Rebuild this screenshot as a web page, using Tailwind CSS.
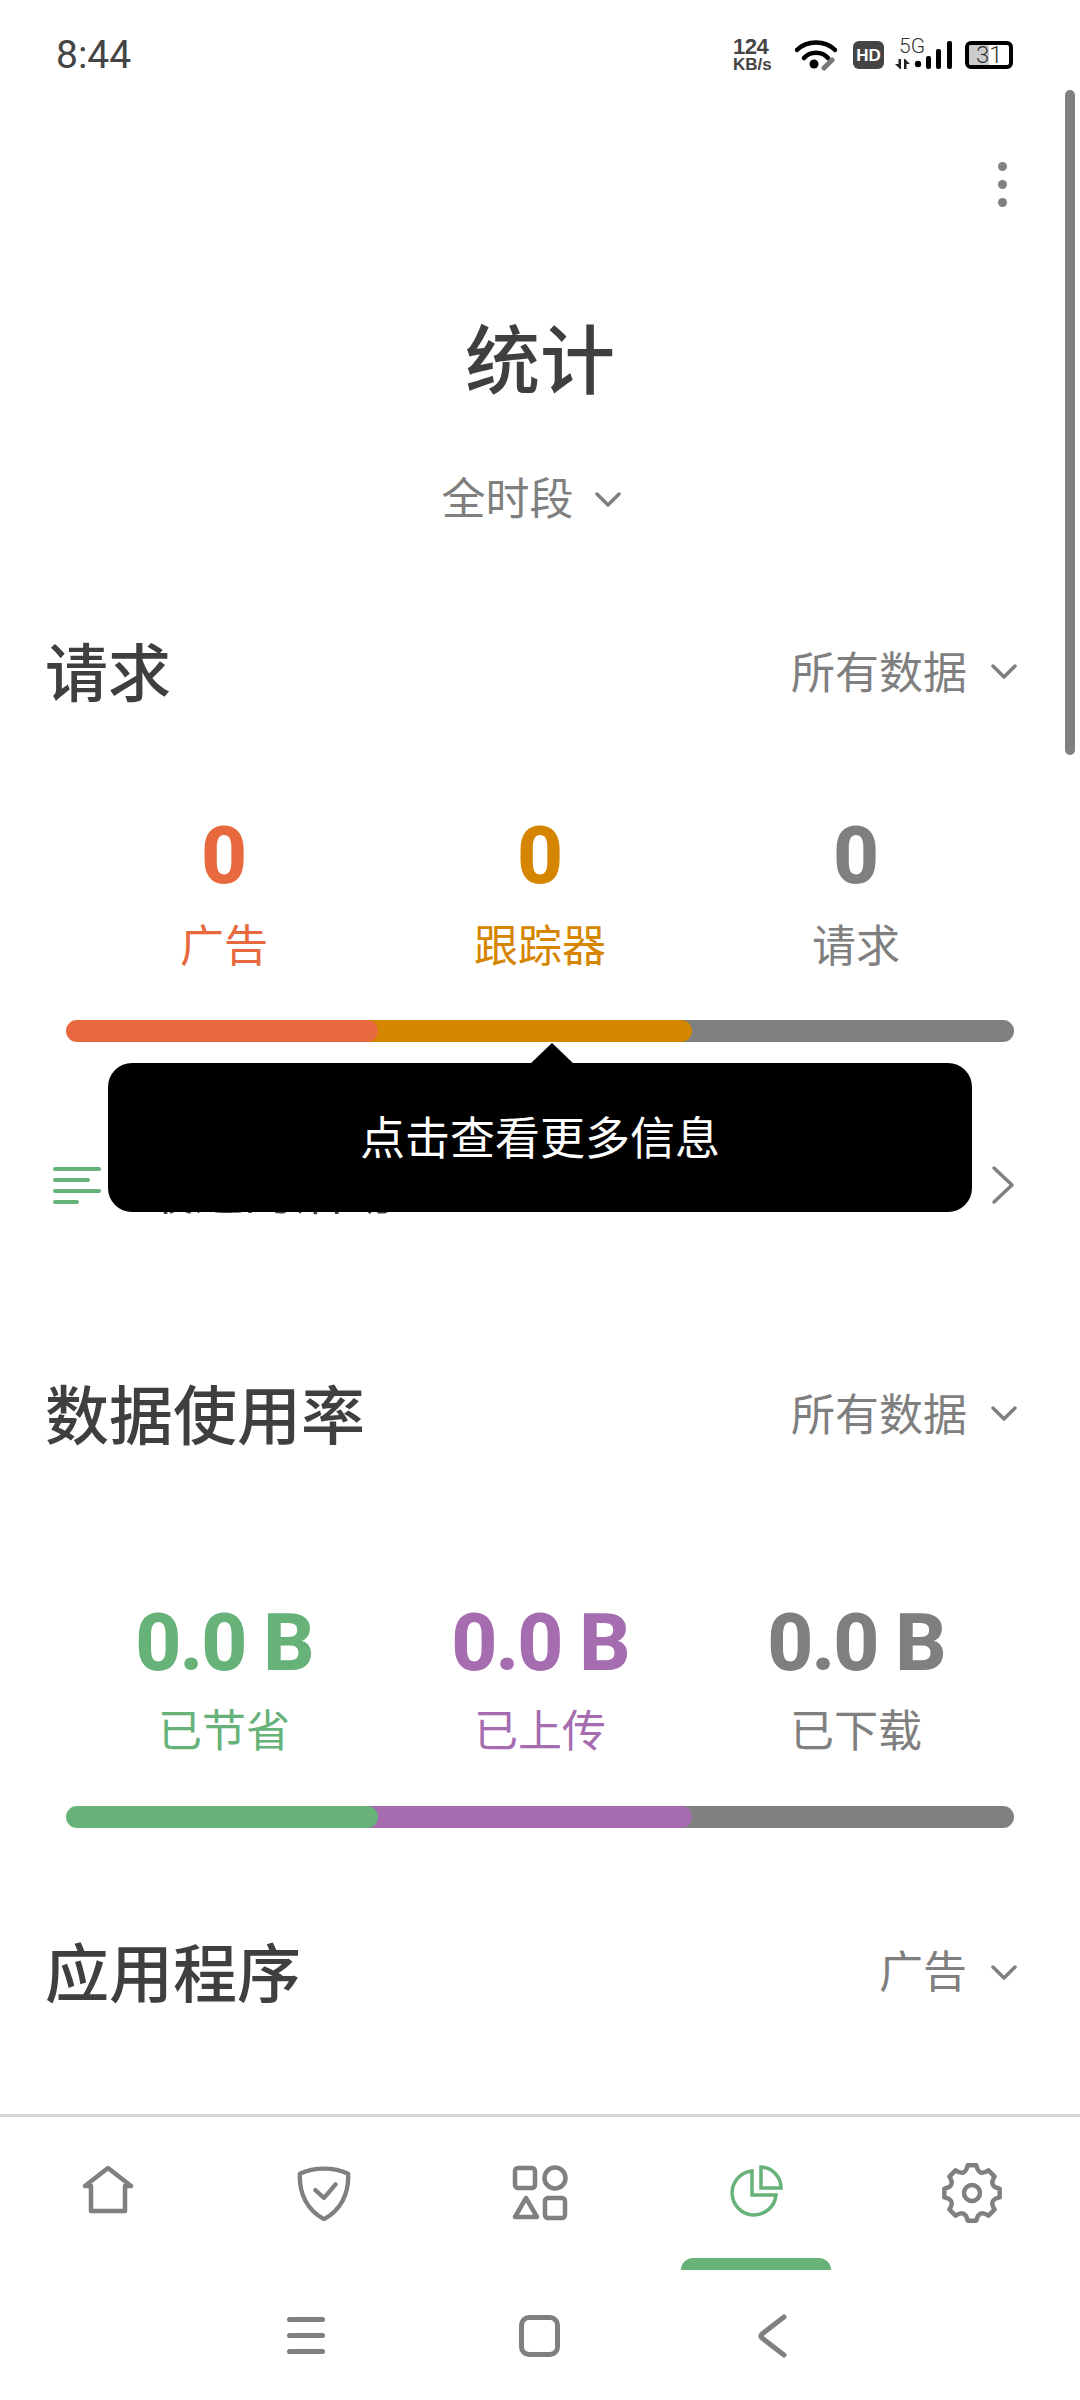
<!DOCTYPE html>
<html lang="zh-CN">
<head>
  <meta charset="UTF-8">
  <meta name="viewport" content="width=device-width, initial-scale=1.0">
  <title>统计</title>
  <script src="https://cdn.jsdelivr.net/npm/@tailwindcss/browser@4"></script>
</head>
<body class="bg-white">
  <div class="relative w-[1080px] h-[2400px] overflow-hidden bg-white text-[#3f3f3f] font-['Roboto','Noto_Sans_CJK_SC',sans-serif]">

    <!-- status bar -->
    <div class="h-[110px] flex items-center justify-between pl-[56px] pr-[67px]">
      <span class="text-[39px] leading-none text-[#444444]">8:44</span>
      <div class="flex items-center h-[50px]">
        <div class="w-[50px] flex flex-col font-['Liberation_Sans',sans-serif] font-bold text-[#444444]">
          <span class="text-[22px] leading-[20px] tracking-[-0.5px]">124</span>
          <span class="text-[17px] leading-[16px]">KB/s</span>
        </div>
        <svg class="ml-[12px]" width="42" height="32" viewBox="0 0 42 32" fill="none">
          <path d="M2 11C12 1 30 1 40 11" stroke="#000" stroke-width="4.5" stroke-linecap="round"/>
          <path d="M9 19C15 12 27 12 33 19" stroke="#000" stroke-width="4.5" stroke-linecap="round"/>
          <circle cx="19" cy="25" r="4.5" fill="#000"/>
          <path d="M29 29L37 21" stroke="#777" stroke-width="5" stroke-linecap="round"/>
        </svg>
        <div class="ml-[16px] w-[31px] h-[28px] rounded-[6px] bg-[#444444] text-white flex items-center justify-center font-['Liberation_Sans',sans-serif] font-bold text-[17px] leading-none">HD</div>
        <svg class="ml-[11px]" width="58" height="44" viewBox="0 0 58 44">
          <text x="4" y="20" font-family="Roboto" font-size="21" font-weight="300" fill="#333">5G</text>
          <path d="M3.5 26H6V36H5L0 31H3.5Z" fill="#222"/>
          <path d="M9 26H10L15 31H11.5V36H9Z" fill="#222"/>
          <circle cx="23" cy="31" r="3.2" fill="#000"/>
          <rect x="31" y="23" width="5" height="13" rx="2" fill="#000"/>
          <rect x="41" y="16" width="5" height="20" rx="2" fill="#000"/>
          <rect x="52" y="8" width="5" height="28" rx="2" fill="#000"/>
        </svg>
        <div class="ml-[12px] w-[48px] h-[28px] rounded-[6px] border-[4px] border-black flex overflow-hidden relative">
          <div class="w-[20px] bg-[#cccccc]"></div>
          <span class="absolute left-[7px] top-[-3px] text-[24px] leading-[26px] font-light text-[#333333]">31</span>
        </div>
      </div>
    </div>

    <!-- toolbar -->
    <div class="h-[202px] flex justify-end pr-[73px] pt-[52px]">
      <div class="flex flex-col gap-[9px]">
        <div class="w-[9px] h-[9px] rounded-full bg-[#808080]"></div>
        <div class="w-[9px] h-[9px] rounded-full bg-[#808080]"></div>
        <div class="w-[9px] h-[9px] rounded-full bg-[#808080]"></div>
      </div>
    </div>

    <h1 class="h-[100px] text-center text-[75px] leading-[100px] font-medium">统计</h1>
    <div class="mt-[55px] h-[60px] pt-[5px] pr-[18px] flex items-center justify-center gap-[21px] text-[44px] text-[#7f7f7f]">
      <span class="leading-[60px]">全时段</span>
      <svg width="26" height="16" viewBox="0 0 26 16" fill="none"><path d="M2 2L13 13L24 2" stroke="#7f7f7f" stroke-width="3.5" stroke-linecap="round" stroke-linejoin="round"/></svg>
    </div>

    <!-- requests -->
    <div class="mt-[105px] h-[80px] flex items-center justify-between pl-[45px] pr-[63px]">
      <h2 class="pt-[6px] text-[63px] leading-[80px] font-medium">请求</h2>
      <div class="flex items-center gap-[24px] text-[44px] text-[#7f7f7f]">
        <span class="pt-[3px]">所有数据</span>
        <svg width="26" height="16" viewBox="0 0 26 16" fill="none"><path d="M2 2L13 13L24 2" stroke="#7f7f7f" stroke-width="3.5" stroke-linecap="round" stroke-linejoin="round"/></svg>
      </div>
    </div>

    <div class="mt-[104px] px-[66px] grid grid-cols-3 text-center">
      <div class="text-[#e8693e]">
        <div class="text-[80px] leading-[80px] font-extrabold">0</div>
        <div class="mt-[21px] text-[44px] leading-[60px]">广告</div>
      </div>
      <div class="text-[#d58500]">
        <div class="text-[80px] leading-[80px] font-extrabold">0</div>
        <div class="mt-[21px] text-[44px] leading-[60px]">跟踪器</div>
      </div>
      <div class="text-[#7f7f7f]">
        <div class="text-[80px] leading-[80px] font-extrabold">0</div>
        <div class="mt-[21px] text-[44px] leading-[60px]">请求</div>
      </div>
    </div>

    <div class="mt-[43px] mx-[66px] h-[22px] flex">
      <div class="relative z-30 w-[312px] rounded-full bg-[#e8693e]"></div>
      <div class="relative z-20 -ml-[11px] w-[325px] rounded-r-full bg-[#d58500]"></div>
      <div class="relative z-10 -ml-[11px] w-[333px] rounded-r-full bg-[#808080]"></div>
    </div>

    <!-- recent activity row -->
    <div class="mt-[103px] h-[80px] flex items-center pl-[53px] pr-[65px]">
      <div class="w-[48px] flex flex-col gap-[7px]">
        <div class="w-[48px] h-[4px] rounded-full bg-[#67b279]"></div>
        <div class="w-[37px] h-[4px] rounded-full bg-[#67b279]"></div>
        <div class="w-[48px] h-[4px] rounded-full bg-[#67b279]"></div>
        <div class="w-[26px] h-[4px] rounded-full bg-[#67b279]"></div>
      </div>
      <span class="ml-[43px] text-[50px] leading-[80px] translate-y-[8px]">最近的活动</span>
      <svg class="ml-auto" width="24" height="40" viewBox="0 0 24 40" fill="none"><path d="M3 3L21 20L3 37" stroke="#808080" stroke-width="3.5" stroke-linecap="round" stroke-linejoin="round"/></svg>
    </div>

    <!-- data usage -->
    <div class="mt-[149px] h-[80px] flex items-center justify-between pl-[45px] pr-[63px]">
      <h2 class="pt-[8px] text-[64px] leading-[80px] font-medium">数据使用率</h2>
      <div class="flex items-center gap-[24px] text-[44px] text-[#7f7f7f]">
        <span class="pt-[3px]">所有数据</span>
        <svg width="26" height="16" viewBox="0 0 26 16" fill="none"><path d="M2 2L13 13L24 2" stroke="#7f7f7f" stroke-width="3.5" stroke-linecap="round" stroke-linejoin="round"/></svg>
      </div>
    </div>

    <div class="mt-[149px] px-[66px] grid grid-cols-3 text-center">
      <div class="text-[#67b279]">
        <div class="text-[80px] leading-[80px] font-extrabold tracking-[-2px]">0.0 B</div>
        <div class="mt-[19px] text-[44px] leading-[60px]">已节省</div>
      </div>
      <div class="text-[#a56db0]">
        <div class="text-[80px] leading-[80px] font-extrabold tracking-[-2px]">0.0 B</div>
        <div class="mt-[19px] text-[44px] leading-[60px]">已上传</div>
      </div>
      <div class="text-[#7f7f7f]">
        <div class="text-[80px] leading-[80px] font-extrabold tracking-[-2px]">0.0 B</div>
        <div class="mt-[19px] text-[44px] leading-[60px]">已下载</div>
      </div>
    </div>

    <div class="mt-[44px] mx-[66px] h-[22px] flex">
      <div class="relative z-30 w-[312px] rounded-full bg-[#67b279]"></div>
      <div class="relative z-20 -ml-[11px] w-[325px] rounded-r-full bg-[#a56db0]"></div>
      <div class="relative z-10 -ml-[11px] w-[333px] rounded-r-full bg-[#808080]"></div>
    </div>

    <!-- apps -->
    <div class="mt-[105px] h-[80px] flex items-center justify-between pl-[45px] pr-[63px]">
      <h2 class="pt-[6px] text-[64px] leading-[80px] font-medium">应用程序</h2>
      <div class="flex items-center gap-[24px] text-[44px] text-[#7f7f7f]">
        <span>广告</span>
        <svg width="26" height="16" viewBox="0 0 26 16" fill="none"><path d="M2 2L13 13L24 2" stroke="#7f7f7f" stroke-width="3.5" stroke-linecap="round" stroke-linejoin="round"/></svg>
      </div>
    </div>

    <!-- tooltip -->
    <div class="absolute left-[108px] top-[1063px] w-[864px] h-[149px] pt-[5px] rounded-[24px] bg-black flex items-center justify-center text-white text-[45px] z-40">
      <svg class="absolute left-[422px] -top-[20px]" width="44" height="21" viewBox="0 0 44 21"><path d="M22 0L44 21H0Z" fill="#000"/></svg>
      <span>点击查看更多信息</span>
    </div>

    <!-- scrollbar -->
    <div class="absolute right-[5px] top-[90px] w-[10px] h-[665px] rounded-full bg-[#808080]"></div>

    <!-- bottom nav -->
    <div class="absolute inset-x-0 bottom-0 h-[286px] bg-white">
      <div class="h-[3px] bg-[#d4d4d4]"></div>
      <div class="relative h-[153px] grid grid-cols-5 pt-[48px]">
        <div class="flex justify-center">
          <svg width="52" height="50" viewBox="0 0 52 50" fill="none" stroke="#808080" stroke-width="4.5" stroke-linejoin="round" stroke-linecap="round"><path d="M3 21L26 3L49 21H43V46H9V21Z"/></svg>
        </div>
        <div class="flex justify-center">
          <svg width="56" height="56" viewBox="0 0 58 58" fill="none" stroke="#808080" stroke-width="4.5" stroke-linejoin="round" stroke-linecap="round"><path d="M4 9C19 2 39 2 54 9C55 30 46 47 29 56C12 47 3 30 4 9Z"/><path d="M20 26L29 34L41 20"/></svg>
        </div>
        <div class="flex justify-center">
          <svg width="56" height="56" viewBox="0 0 56 56" fill="none" stroke="#808080" stroke-width="4.5" stroke-linejoin="round"><rect x="3" y="3" width="20" height="20" rx="3"/><circle cx="43" cy="13" r="10.5"/><path d="M14 33L25 52H3Z"/><rect x="33" y="33" width="20" height="20" rx="3"/></svg>
        </div>
        <div class="flex justify-center">
          <svg width="56" height="56" viewBox="0 0 56 56" fill="none" stroke="#67b279" stroke-width="3.5"><path d="M24 6A22 22 0 1 0 48 30H24Z"/><path d="M33 2A21 21 0 0 1 53 23H33Z"/></svg>
        </div>
        <div class="flex justify-center">
          <svg class="-mt-[2px]" width="60" height="60" viewBox="0 0 60 60" fill="none" stroke="#808080" stroke-width="4.5" stroke-linejoin="round"><path d="M25.62 2.34L34.38 2.34Q36.7 13.83 46.46 7.35L52.65 13.54Q46.17 23.3 57.66 25.62L57.66 34.38Q46.17 36.7 52.65 46.46L46.46 52.65Q36.7 46.17 34.38 57.66L25.62 57.66Q23.3 46.17 13.54 52.65L7.35 46.46Q13.83 36.7 2.34 34.38L2.34 25.62Q13.83 23.3 7.35 13.54L13.54 7.35Q23.3 13.83 25.62 2.34Z"/><circle cx="30" cy="30" r="8"/></svg>
        </div>
        <div class="absolute left-[681px] bottom-0 w-[150px] h-[12px] rounded-t-[12px] bg-[#67b279]"></div>
      </div>
      <div class="relative h-[130px]">
        <div class="absolute left-[287px] top-[47px] w-[38px] flex flex-col gap-[11px]">
          <div class="h-[5px] rounded-full bg-[#808080]"></div>
          <div class="h-[5px] rounded-full bg-[#808080]"></div>
          <div class="h-[5px] rounded-full bg-[#808080]"></div>
        </div>
        <div class="absolute left-[519px] top-[45px] w-[41px] h-[42px] rounded-[10px] border-[5px] border-[#808080]"></div>
        <svg class="absolute left-[758px] top-[44px]" width="30" height="44" viewBox="0 0 30 44" fill="none"><path d="M26 3L4 20Q2 22 4 24L26 41" stroke="#808080" stroke-width="5" stroke-linecap="round" stroke-linejoin="round"/></svg>
      </div>
    </div>
  </div>
</body>
</html>
